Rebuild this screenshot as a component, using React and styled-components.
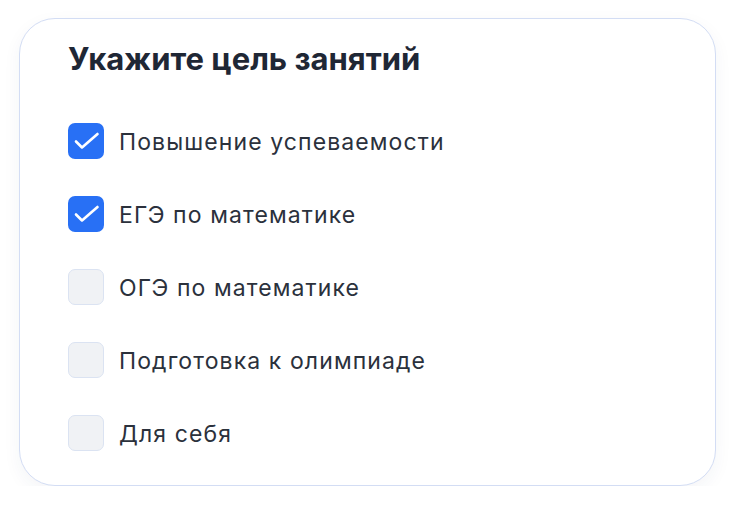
import React, { useState } from 'react';
import styled, { createGlobalStyle } from 'styled-components';

const GlobalStyle = createGlobalStyle`
  html, body {
    margin: 0;
    padding: 0;
    background: #ffffff;
  }
  body {
    font-family: 'Inter', 'Noto Sans', sans-serif;
  }
`;

const Page = styled.div`
  padding: 18px 0 0 19px;
`;

const Card = styled.div`
  box-sizing: border-box;
  width: 697px;
  height: 468px;
  border: 1.5px solid #d3ddf4;
  border-radius: 36px;
  background: #ffffff;
  box-shadow: 0 6px 18px rgba(30, 50, 90, 0.05);
  padding: 21px 48px 0 48px;
`;

const Title = styled.h2`
  margin: 0 0 45px 0;
  font-size: 31px;
  line-height: 38px;
  font-weight: 700;
  color: #1f2735;
  letter-spacing: 0;
`;

const List = styled.div`
  display: flex;
  flex-direction: column;
  gap: 37px;
`;

const Row = styled.label`
  display: flex;
  align-items: center;
  gap: 15px;
  height: 36px;
  cursor: pointer;
`;

const Box = styled.span`
  box-sizing: border-box;
  width: 36px;
  height: 36px;
  border-radius: 7px;
  display: flex;
  align-items: center;
  justify-content: center;
  flex-shrink: 0;
  background: ${({ checked }) => (checked ? '#2870f5' : '#f0f2f5')};
  border: ${({ checked }) => (checked ? 'none' : '1.5px solid #dbe3f2')};
`;

const Label = styled.span`
  font-size: 23px;
  color: #2b313c;
  letter-spacing: 1.1px;
  padding-top: 2px;
`;

const items = [
  { title: 'Повышение успеваемости', value: true },
  { title: 'ЕГЭ по математике', value: true },
  { title: 'ОГЭ по математике', value: false },
  { title: 'Подготовка к олимпиаде', value: false },
  { title: 'Для себя', value: false },
];

const Check = () => (
  <svg width="36" height="36" viewBox="0 0 36 36" fill="none">
    <path d="M8 18.5l6 6L29.5 11" stroke="#fff" strokeWidth="2.6" strokeLinecap="round" strokeLinejoin="round" />
  </svg>
);

export default function App() {
  const [state, setState] = useState(items.map(i => i.value));

  const toggle = (index) => {
    setState(prev => prev.map((v, i) => (i === index ? !v : v)));
  };

  return (
    <Page>
      <GlobalStyle />
      <Card>
        <Title>Укажите цель занятий</Title>
        <List>
          {items.map((item, index) => (
            <Row key={item.title} onClick={() => toggle(index)}>
              <Box checked={state[index]}>{state[index] && <Check />}</Box>
              <Label>{item.title}</Label>
            </Row>
          ))}
        </List>
      </Card>
    </Page>
  );
}
